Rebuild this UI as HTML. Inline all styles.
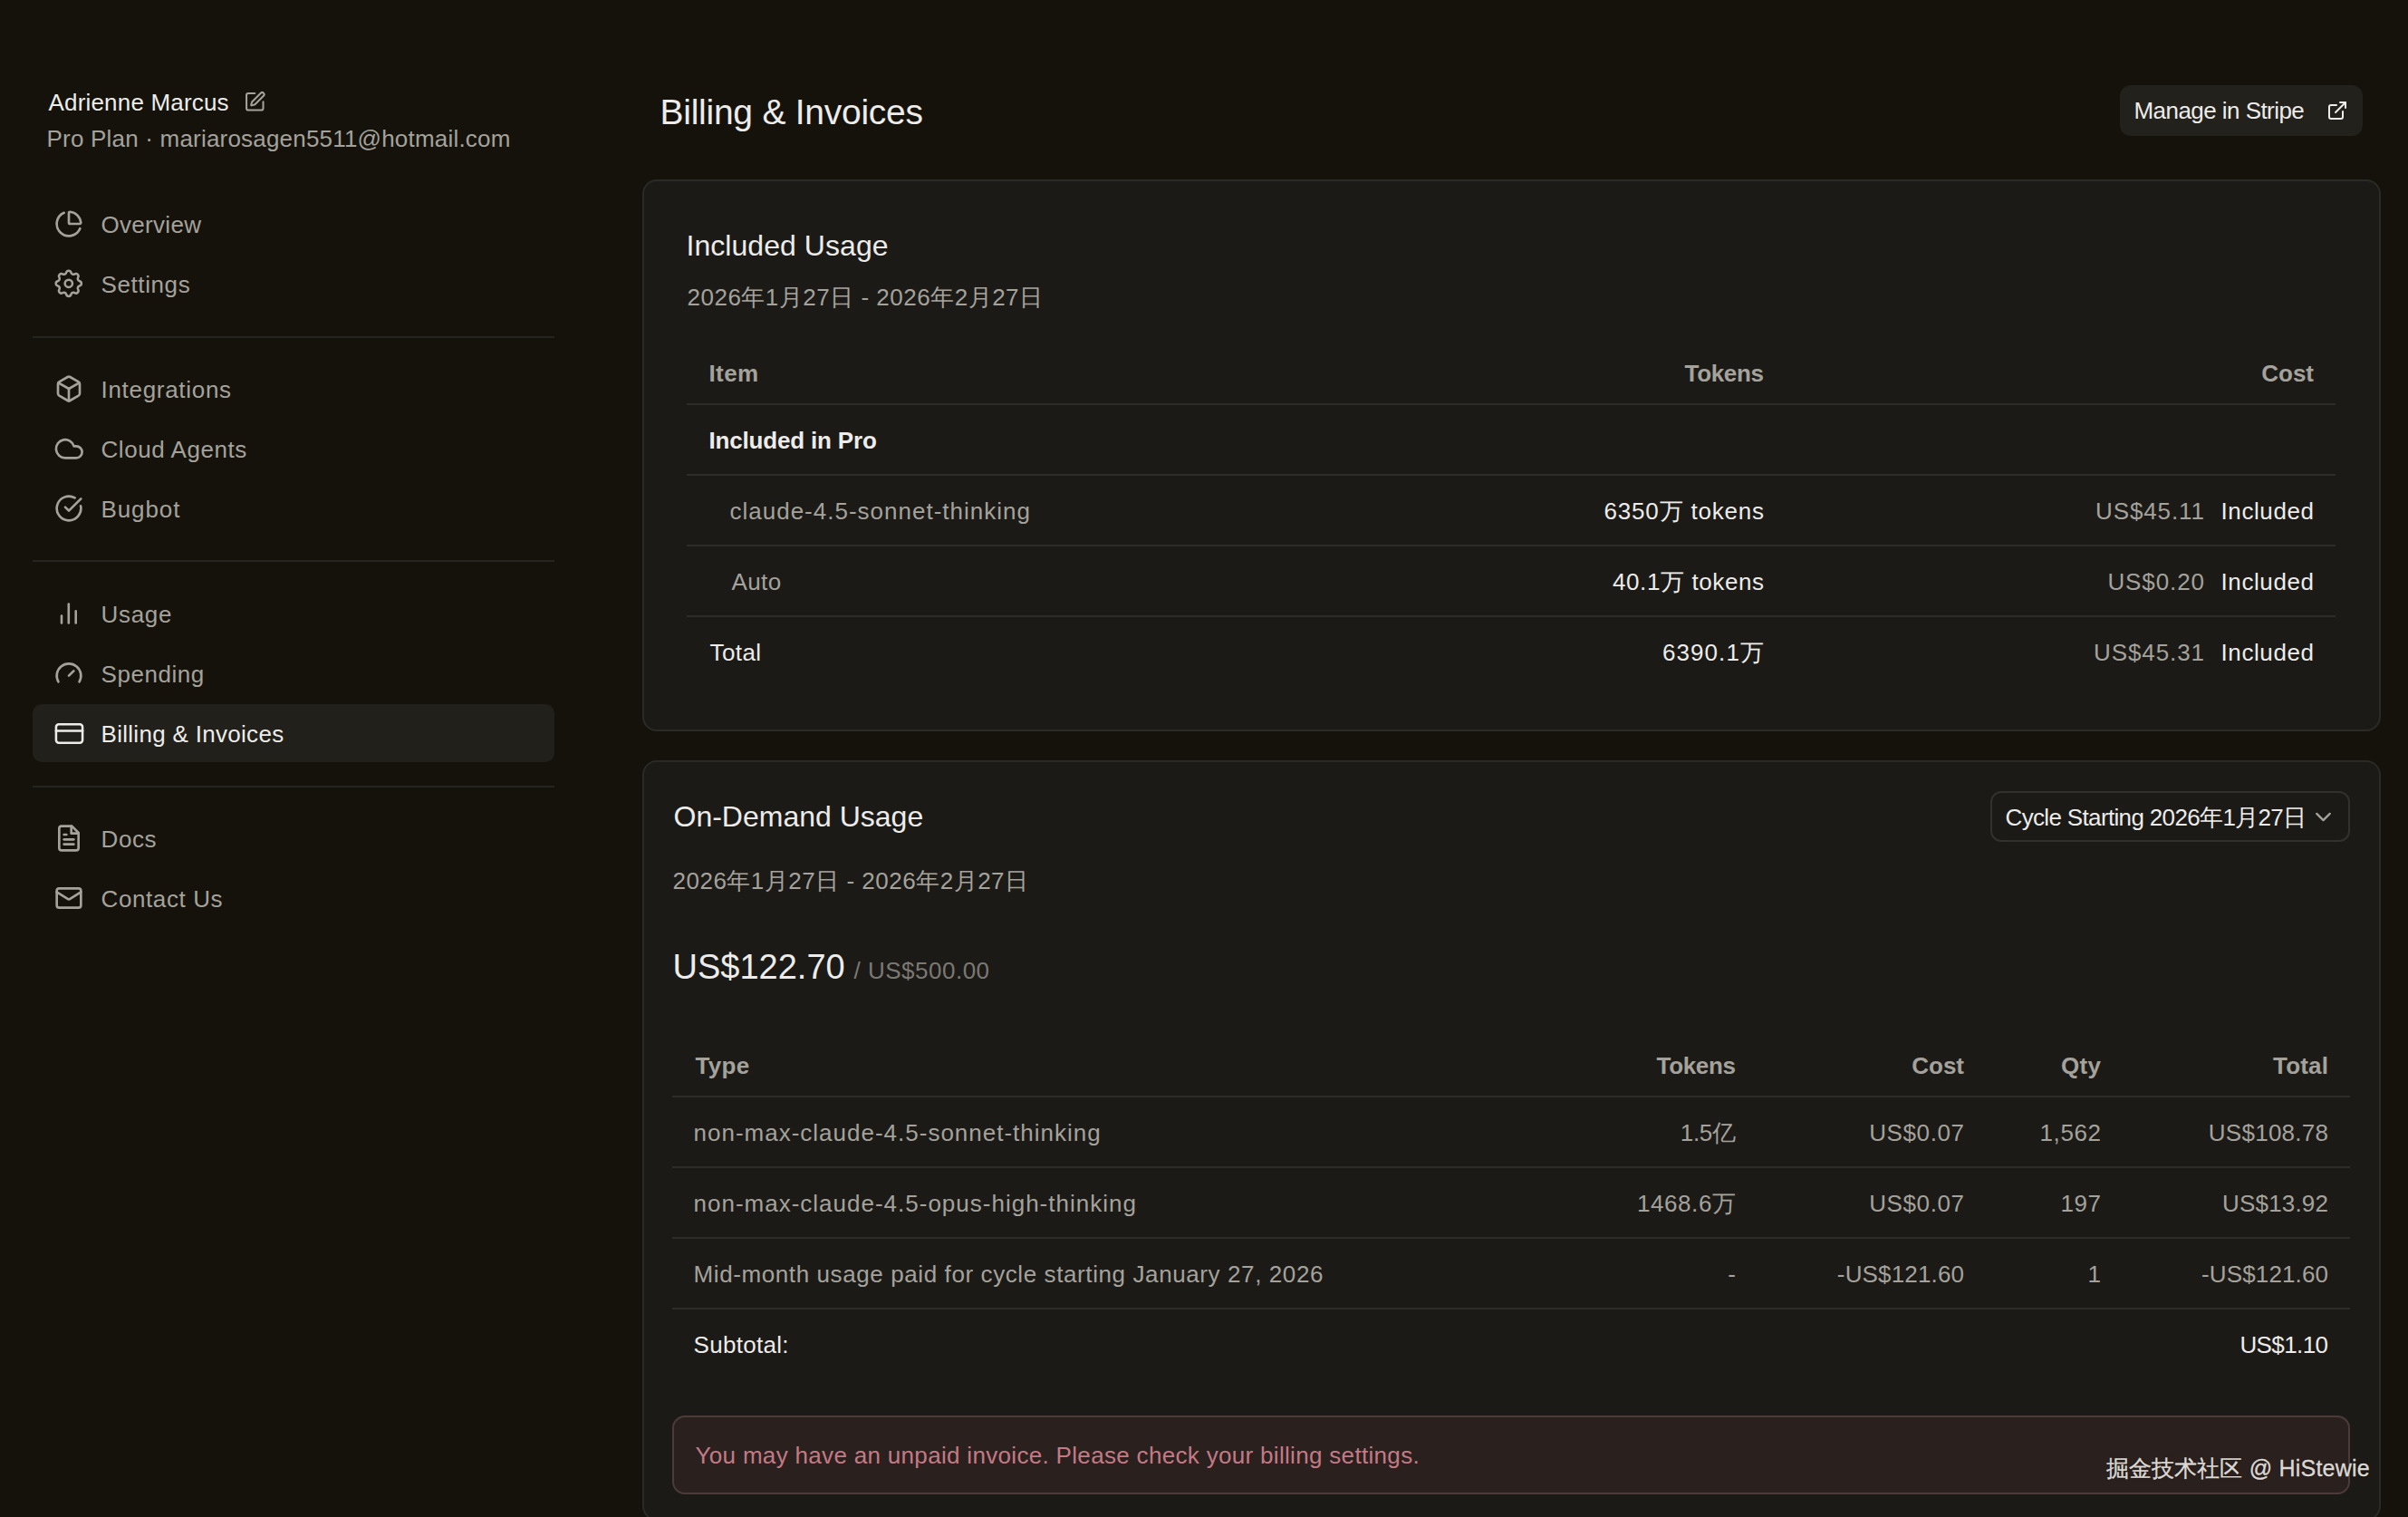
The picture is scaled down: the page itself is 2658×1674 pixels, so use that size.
<!DOCTYPE html>
<html><head><meta charset="utf-8"><title>Billing &amp; Invoices</title>
<style>
html,body{margin:0;padding:0;}
body{width:2658px;height:1674px;overflow:hidden;position:relative;background:#14120b;font-family:"Liberation Sans",sans-serif;}
.t{position:absolute;white-space:nowrap;line-height:1;}
svg{display:block}
</style></head><body>
<div class="t" style="left:53.5px;top:100.0px;font-size:26px;color:#edecea;font-weight:400;letter-spacing:0.18px;">Adrienne Marcus</div>
<svg style="position:absolute;left:269.3px;top:100.1px" width="24.6" height="24.6" viewBox="0 0 24 24" fill="none" stroke="#a5a29c" stroke-width="2" stroke-linecap="round" stroke-linejoin="round"><path d="M12 3H5a2 2 0 0 0-2 2v14a2 2 0 0 0 2 2h14a2 2 0 0 0 2-2v-7"/><path d="M18.375 2.625a1 1 0 0 1 3 3l-9.013 9.014a2 2 0 0 1-.853.505l-2.873.84a.5.5 0 0 1-.62-.62l.84-2.873a2 2 0 0 1 .506-.852z"/></svg>
<div class="t" style="left:51.5px;top:140.0px;font-size:26px;color:#a5a29c;font-weight:400;letter-spacing:0.2px;">Pro Plan · mariarosagen5511@hotmail.com</div>
<svg style="position:absolute;left:60px;top:231px" width="32" height="32" viewBox="0 0 24 24" fill="none" stroke="#a5a29c" stroke-width="2" stroke-linecap="round" stroke-linejoin="round"><path d="M21 12c.552 0 1.005-.449.95-.998a10 10 0 0 0-8.953-8.951c-.55-.055-.998.398-.998.95v8a1 1 0 0 0 1 1z"/><path d="M21.21 15.89A10 10 0 1 1 8 2.83"/></svg>
<div class="t" style="left:111.5px;top:235.0px;font-size:26px;color:#a5a29c;font-weight:400;letter-spacing:0.3px;">Overview</div>
<svg style="position:absolute;left:57.2px;top:293.90000000000003px" width="37.6" height="37.6" viewBox="0 0 24 24" fill="none" stroke="#a5a29c" stroke-width="1.6" stroke-linecap="round" stroke-linejoin="round"><path d="M10.325 4.317c.426 -1.756 2.924 -1.756 3.35 0a1.724 1.724 0 0 0 2.573 1.066c1.543 -.94 3.31 .826 2.37 2.37a1.724 1.724 0 0 0 1.065 2.572c1.756 .426 1.756 2.924 0 3.35a1.724 1.724 0 0 0 -1.066 2.573c.94 1.543 -.826 3.31 -2.37 2.37a1.724 1.724 0 0 0 -2.572 1.065c-.426 1.756 -2.924 1.756 -3.35 0a1.724 1.724 0 0 0 -2.573 -1.066c-1.543 .94 -3.31 -.826 -2.37 -2.37a1.724 1.724 0 0 0 -1.065 -2.572c-1.756 -.426 -1.756 -2.924 0 -3.35a1.724 1.724 0 0 0 1.066 -2.573c-.94 -1.543 .826 -3.31 2.37 -2.37c1 .608 2.296 .07 2.572 -1.065z"/><circle cx="12" cy="12" r="2.65"/></svg>
<div class="t" style="left:111.5px;top:301.0px;font-size:26px;color:#a5a29c;font-weight:400;letter-spacing:0.6px;">Settings</div>
<div style="position:absolute;left:36px;top:371px;width:576px;height:2px;box-sizing:border-box;background:#252420"></div>
<svg style="position:absolute;left:60px;top:413px" width="32" height="32" viewBox="0 0 24 24" fill="none" stroke="#a5a29c" stroke-width="2" stroke-linecap="round" stroke-linejoin="round"><path d="M21 8a2 2 0 0 0-1-1.73l-7-4a2 2 0 0 0-2 0l-7 4A2 2 0 0 0 3 8v8a2 2 0 0 0 1 1.73l7 4a2 2 0 0 0 2 0l7-4A2 2 0 0 0 21 16Z"/><path d="m3.3 7 8.7 5 8.7-5"/><path d="M12 22V12"/></svg>
<div class="t" style="left:111.5px;top:417.0px;font-size:26px;color:#a5a29c;font-weight:400;letter-spacing:0.7px;">Integrations</div>
<svg style="position:absolute;left:58.75px;top:477.75px" width="34.5" height="34.5" viewBox="0 0 24 24" fill="none" stroke="#a5a29c" stroke-width="1.85" stroke-linecap="round" stroke-linejoin="round"><path d="M17.5 19H9a7 7 0 1 1 6.71-9h1.79a4.5 4.5 0 1 1 0 9Z"/></svg>
<div class="t" style="left:111.5px;top:483.0px;font-size:26px;color:#a5a29c;font-weight:400;letter-spacing:0.55px;">Cloud Agents</div>
<svg style="position:absolute;left:60px;top:545px" width="32" height="32" viewBox="0 0 24 24" fill="none" stroke="#a5a29c" stroke-width="2" stroke-linecap="round" stroke-linejoin="round"><path d="M21.801 10A10 10 0 1 1 17 3.335"/><path d="m9 11 3 3L22 4"/></svg>
<div class="t" style="left:111.5px;top:549.0px;font-size:26px;color:#a5a29c;font-weight:400;letter-spacing:0.9px;">Bugbot</div>
<div style="position:absolute;left:36px;top:618px;width:576px;height:2px;box-sizing:border-box;background:#252420"></div>
<svg style="position:absolute;left:60px;top:661px" width="32" height="32" viewBox="0 0 32 32" fill="none" stroke="#a5a29c" stroke-width="2.6" stroke-linecap="round" stroke-linejoin="round"><path d="M8 18.5V26.4"/><path d="M15.8 5.5V26.4"/><path d="M23.7 13.4V26.4"/></svg>
<div class="t" style="left:111.5px;top:665.0px;font-size:26px;color:#a5a29c;font-weight:400;letter-spacing:0.7px;">Usage</div>
<svg style="position:absolute;left:60px;top:726.5px" width="32" height="32" viewBox="0 0 24 24" fill="none" stroke="#a5a29c" stroke-width="2" stroke-linecap="round" stroke-linejoin="round"><path d="m12 14 4-4"/><path d="M3.34 19a10 10 0 1 1 17.32 0"/></svg>
<div class="t" style="left:111.5px;top:730.5px;font-size:26px;color:#a5a29c;font-weight:400;letter-spacing:0.55px;">Spending</div>
<div style="position:absolute;left:36px;top:777px;width:576px;height:64px;box-sizing:border-box;background:#21201b;border-radius:10px"></div>
<svg style="position:absolute;left:58.5px;top:791.5px" width="35" height="35" viewBox="0 0 24 24" fill="none" stroke="#edecea" stroke-width="1.75" stroke-linecap="round" stroke-linejoin="round"><rect width="20" height="14" x="2" y="5" rx="2"/><line x1="2" x2="22" y1="10" y2="10"/></svg>
<div class="t" style="left:111.5px;top:797.0px;font-size:26px;color:#edecea;font-weight:400;letter-spacing:0.3px;">Billing &amp; Invoices</div>
<div style="position:absolute;left:36px;top:867px;width:576px;height:2px;box-sizing:border-box;background:#252420"></div>
<svg style="position:absolute;left:60px;top:909px" width="32" height="32" viewBox="0 0 24 24" fill="none" stroke="#a5a29c" stroke-width="2" stroke-linecap="round" stroke-linejoin="round"><path d="M14.5 2H6a2 2 0 0 0-2 2v16a2 2 0 0 0 2 2h12a2 2 0 0 0 2-2V7.5L14.5 2z"/><polyline points="14 2 14 8 20 8"/><line x1="16" x2="8" y1="13" y2="13"/><line x1="16" x2="8" y1="17" y2="17"/><line x1="10" x2="8" y1="9" y2="9"/></svg>
<div class="t" style="left:111.5px;top:913.0px;font-size:26px;color:#a5a29c;font-weight:400;letter-spacing:0.6px;">Docs</div>
<svg style="position:absolute;left:60px;top:975px" width="32" height="32" viewBox="0 0 24 24" fill="none" stroke="#a5a29c" stroke-width="2" stroke-linecap="round" stroke-linejoin="round"><rect width="20" height="16" x="2" y="4" rx="2"/><path d="m22 7-8.97 5.7a1.94 1.94 0 0 1-2.06 0L2 7"/></svg>
<div class="t" style="left:111.5px;top:979.0px;font-size:26px;color:#a5a29c;font-weight:400;letter-spacing:0.6px;">Contact Us</div>
<div class="t" style="left:728.5px;top:104.0px;font-size:39px;color:#edecea;font-weight:400;letter-spacing:-0.25px;">Billing &amp; Invoices</div>
<div style="position:absolute;left:2340px;top:94px;width:268px;height:56px;box-sizing:border-box;background:#23211c;border-radius:12px"></div>
<div class="t" style="left:2355.5px;top:109.0px;font-size:26px;color:#edecea;font-weight:400;letter-spacing:-0.55px;">Manage in Stripe</div>
<svg style="position:absolute;left:2568px;top:109.7px" width="24" height="24" viewBox="0 0 24 24" fill="none" stroke="#edecea" stroke-width="2" stroke-linecap="round" stroke-linejoin="round"><path d="M15 3h6v6"/><path d="M10 14 21 3"/><path d="M18 13v6a2 2 0 0 1-2 2H5a2 2 0 0 1-2-2V8a2 2 0 0 1 2-2h6"/></svg>
<div style="position:absolute;left:709px;top:198px;width:1919px;height:609px;box-sizing:border-box;background:#1b1a16;border:2px solid #2c2a26;border-radius:16px"></div>
<div class="t" style="left:757.5px;top:254.9px;font-size:32px;color:#edecea;font-weight:400;letter-spacing:0.05px;">Included Usage</div>
<div class="t" style="left:758.5px;top:315.0px;font-size:26px;color:#a5a29c;font-weight:400;letter-spacing:0.5px;">2026年1月27日 - 2026年2月27日</div>
<div style="position:absolute;left:758px;top:445px;width:1820px;height:2px;box-sizing:border-box;background:#2e2c28"></div>
<div style="position:absolute;left:758px;top:523px;width:1820px;height:2px;box-sizing:border-box;background:#2e2c28"></div>
<div style="position:absolute;left:758px;top:601px;width:1820px;height:2px;box-sizing:border-box;background:#2e2c28"></div>
<div style="position:absolute;left:758px;top:679px;width:1820px;height:2px;box-sizing:border-box;background:#2e2c28"></div>
<div class="t" style="left:782.5px;top:399.0px;font-size:26px;color:#a5a29c;font-weight:700;letter-spacing:0.4px;">Item</div>
<div class="t" style="right:711.4px;top:399.0px;font-size:26px;color:#a5a29c;font-weight:700;letter-spacing:-0.35px;">Tokens</div>
<div class="t" style="right:104.0px;top:399.0px;font-size:26px;color:#a5a29c;font-weight:700;letter-spacing:0px;">Cost</div>
<div class="t" style="left:782.5px;top:473.0px;font-size:26px;color:#edecea;font-weight:700;letter-spacing:-0.18px;">Included in Pro</div>
<div class="t" style="left:805.5px;top:551.0px;font-size:26px;color:#a5a29c;font-weight:400;letter-spacing:1.0px;">claude-4.5-sonnet-thinking</div>
<div class="t" style="right:710.2px;top:551.0px;font-size:26px;color:#edecea;font-weight:400;letter-spacing:0.8px;">6350万 tokens</div>
<div class="t" style="right:224.1px;top:551.0px;font-size:26px;color:#a5a29c;font-weight:400;letter-spacing:0.9px;">US$45.11</div>
<div class="t" style="right:103.4px;top:551.0px;font-size:26px;color:#edecea;font-weight:400;letter-spacing:0.6px;">Included</div>
<div class="t" style="left:807.5px;top:629.0px;font-size:26px;color:#a5a29c;font-weight:400;letter-spacing:0.4px;">Auto</div>
<div class="t" style="right:710.4px;top:629.0px;font-size:26px;color:#edecea;font-weight:400;letter-spacing:0.6px;">40.1万 tokens</div>
<div class="t" style="right:224.1px;top:629.0px;font-size:26px;color:#a5a29c;font-weight:400;letter-spacing:0.9px;">US$0.20</div>
<div class="t" style="right:103.4px;top:629.0px;font-size:26px;color:#edecea;font-weight:400;letter-spacing:0.6px;">Included</div>
<div class="t" style="left:783.5px;top:707.0px;font-size:26px;color:#edecea;font-weight:400;letter-spacing:0.4px;">Total</div>
<div class="t" style="right:709.9px;top:707.0px;font-size:26px;color:#edecea;font-weight:400;letter-spacing:1.1px;">6390.1万</div>
<div class="t" style="right:224.1px;top:707.0px;font-size:26px;color:#a5a29c;font-weight:400;letter-spacing:0.9px;">US$45.31</div>
<div class="t" style="right:103.4px;top:707.0px;font-size:26px;color:#edecea;font-weight:400;letter-spacing:0.6px;">Included</div>
<div style="position:absolute;left:709px;top:839px;width:1919px;height:839px;box-sizing:border-box;background:#1b1a16;border:2px solid #2c2a26;border-radius:16px"></div>
<div class="t" style="left:743.5px;top:884.9px;font-size:32px;color:#edecea;font-weight:400;letter-spacing:0.0px;">On-Demand Usage</div>
<div class="t" style="left:742.5px;top:959.0px;font-size:26px;color:#a5a29c;font-weight:400;letter-spacing:0.5px;">2026年1月27日 - 2026年2月27日</div>
<div style="position:absolute;left:2197px;top:873px;width:397px;height:56px;box-sizing:border-box;border:2px solid #33312d;border-radius:12px"></div>
<div class="t" style="left:2213.5px;top:889.0px;font-size:26px;color:#edecea;font-weight:400;letter-spacing:-0.65px;">Cycle Starting 2026年1月27日</div>
<svg style="position:absolute;left:2549.5px;top:886.5px" width="29" height="29" viewBox="0 0 24 24" fill="none" stroke="#a5a29c" stroke-width="1.9" stroke-linecap="round" stroke-linejoin="round"><path d="m6 9 6 6 6-6"/></svg>
<div class="t" style="left:742.5px;top:1047.8px;font-size:38px;color:#edecea;font-weight:400;letter-spacing:0.0px;">US$122.70</div>
<div class="t" style="left:942.5px;top:1058.0px;font-size:26px;color:#7c7973;font-weight:400;letter-spacing:0.5px;">/ US$500.00</div>
<div style="position:absolute;left:742px;top:1209px;width:1852px;height:2px;box-sizing:border-box;background:#2e2c28"></div>
<div style="position:absolute;left:742px;top:1287px;width:1852px;height:2px;box-sizing:border-box;background:#2e2c28"></div>
<div style="position:absolute;left:742px;top:1365px;width:1852px;height:2px;box-sizing:border-box;background:#2e2c28"></div>
<div style="position:absolute;left:742px;top:1443px;width:1852px;height:2px;box-sizing:border-box;background:#2e2c28"></div>
<div class="t" style="left:767.5px;top:1163.0px;font-size:26px;color:#a5a29c;font-weight:700;letter-spacing:0.3px;">Type</div>
<div class="t" style="right:742.4px;top:1163.0px;font-size:26px;color:#a5a29c;font-weight:700;letter-spacing:-0.35px;">Tokens</div>
<div class="t" style="right:490.0px;top:1163.0px;font-size:26px;color:#a5a29c;font-weight:700;letter-spacing:0px;">Cost</div>
<div class="t" style="right:338.7px;top:1163.0px;font-size:26px;color:#a5a29c;font-weight:700;letter-spacing:0.3px;">Qty</div>
<div class="t" style="right:87.8px;top:1163.0px;font-size:26px;color:#a5a29c;font-weight:700;letter-spacing:0.2px;">Total</div>
<div class="t" style="left:765.5px;top:1237.0px;font-size:26px;color:#a5a29c;font-weight:400;letter-spacing:1.0px;">non-max-claude-4.5-sonnet-thinking</div>
<div class="t" style="right:742.3px;top:1237.0px;font-size:26px;color:#a5a29c;font-weight:400;letter-spacing:-0.3px;">1.5亿</div>
<div class="t" style="right:489.4px;top:1237.0px;font-size:26px;color:#a5a29c;font-weight:400;letter-spacing:0.6px;">US$0.07</div>
<div class="t" style="right:338.4px;top:1237.0px;font-size:26px;color:#a5a29c;font-weight:400;letter-spacing:0.6px;">1,562</div>
<div class="t" style="right:87.8px;top:1237.0px;font-size:26px;color:#a5a29c;font-weight:400;letter-spacing:0.25px;">US$108.78</div>
<div class="t" style="left:765.5px;top:1315.0px;font-size:26px;color:#a5a29c;font-weight:400;letter-spacing:1.0px;">non-max-claude-4.5-opus-high-thinking</div>
<div class="t" style="right:741.4px;top:1315.0px;font-size:26px;color:#a5a29c;font-weight:400;letter-spacing:0.6px;">1468.6万</div>
<div class="t" style="right:489.4px;top:1315.0px;font-size:26px;color:#a5a29c;font-weight:400;letter-spacing:0.6px;">US$0.07</div>
<div class="t" style="right:338.4px;top:1315.0px;font-size:26px;color:#a5a29c;font-weight:400;letter-spacing:0.6px;">197</div>
<div class="t" style="right:87.8px;top:1315.0px;font-size:26px;color:#a5a29c;font-weight:400;letter-spacing:0.2px;">US$13.92</div>
<div class="t" style="left:765.5px;top:1393.0px;font-size:26px;color:#a5a29c;font-weight:400;letter-spacing:0.6px;">Mid-month usage paid for cycle starting January 27, 2026</div>
<div class="t" style="right:741.4px;top:1393.0px;font-size:26px;color:#a5a29c;font-weight:400;letter-spacing:0.6px;">-</div>
<div class="t" style="right:489.9px;top:1393.0px;font-size:26px;color:#a5a29c;font-weight:400;letter-spacing:0.15px;">-US$121.60</div>
<div class="t" style="right:338.4px;top:1393.0px;font-size:26px;color:#a5a29c;font-weight:400;letter-spacing:0.6px;">1</div>
<div class="t" style="right:87.8px;top:1393.0px;font-size:26px;color:#a5a29c;font-weight:400;letter-spacing:0.15px;">-US$121.60</div>
<div class="t" style="left:765.5px;top:1471.0px;font-size:26px;color:#edecea;font-weight:400;letter-spacing:0.3px;">Subtotal:</div>
<div class="t" style="right:88.6px;top:1471.0px;font-size:26px;color:#edecea;font-weight:400;letter-spacing:-0.6px;">US$1.10</div>
<div style="position:absolute;left:742px;top:1562px;width:1852px;height:87px;box-sizing:border-box;background:#2a201e;border:2px solid #4d3b3a;border-radius:14px"></div>
<div class="t" style="left:767.5px;top:1593.0px;font-size:26px;color:#c47a85;font-weight:400;letter-spacing:0.32px;">You may have an unpaid invoice. Please check your billing settings.</div>
<div class="t" style="left:2324.5px;top:1607.8px;font-size:25px;color:#dcd8d3;font-weight:500;letter-spacing:0.2px;text-shadow:0 0 2px rgba(0,0,0,.5);-webkit-text-stroke:0.35px #dcd8d3">掘金技术社区 @ HiStewie</div>
</body></html>
